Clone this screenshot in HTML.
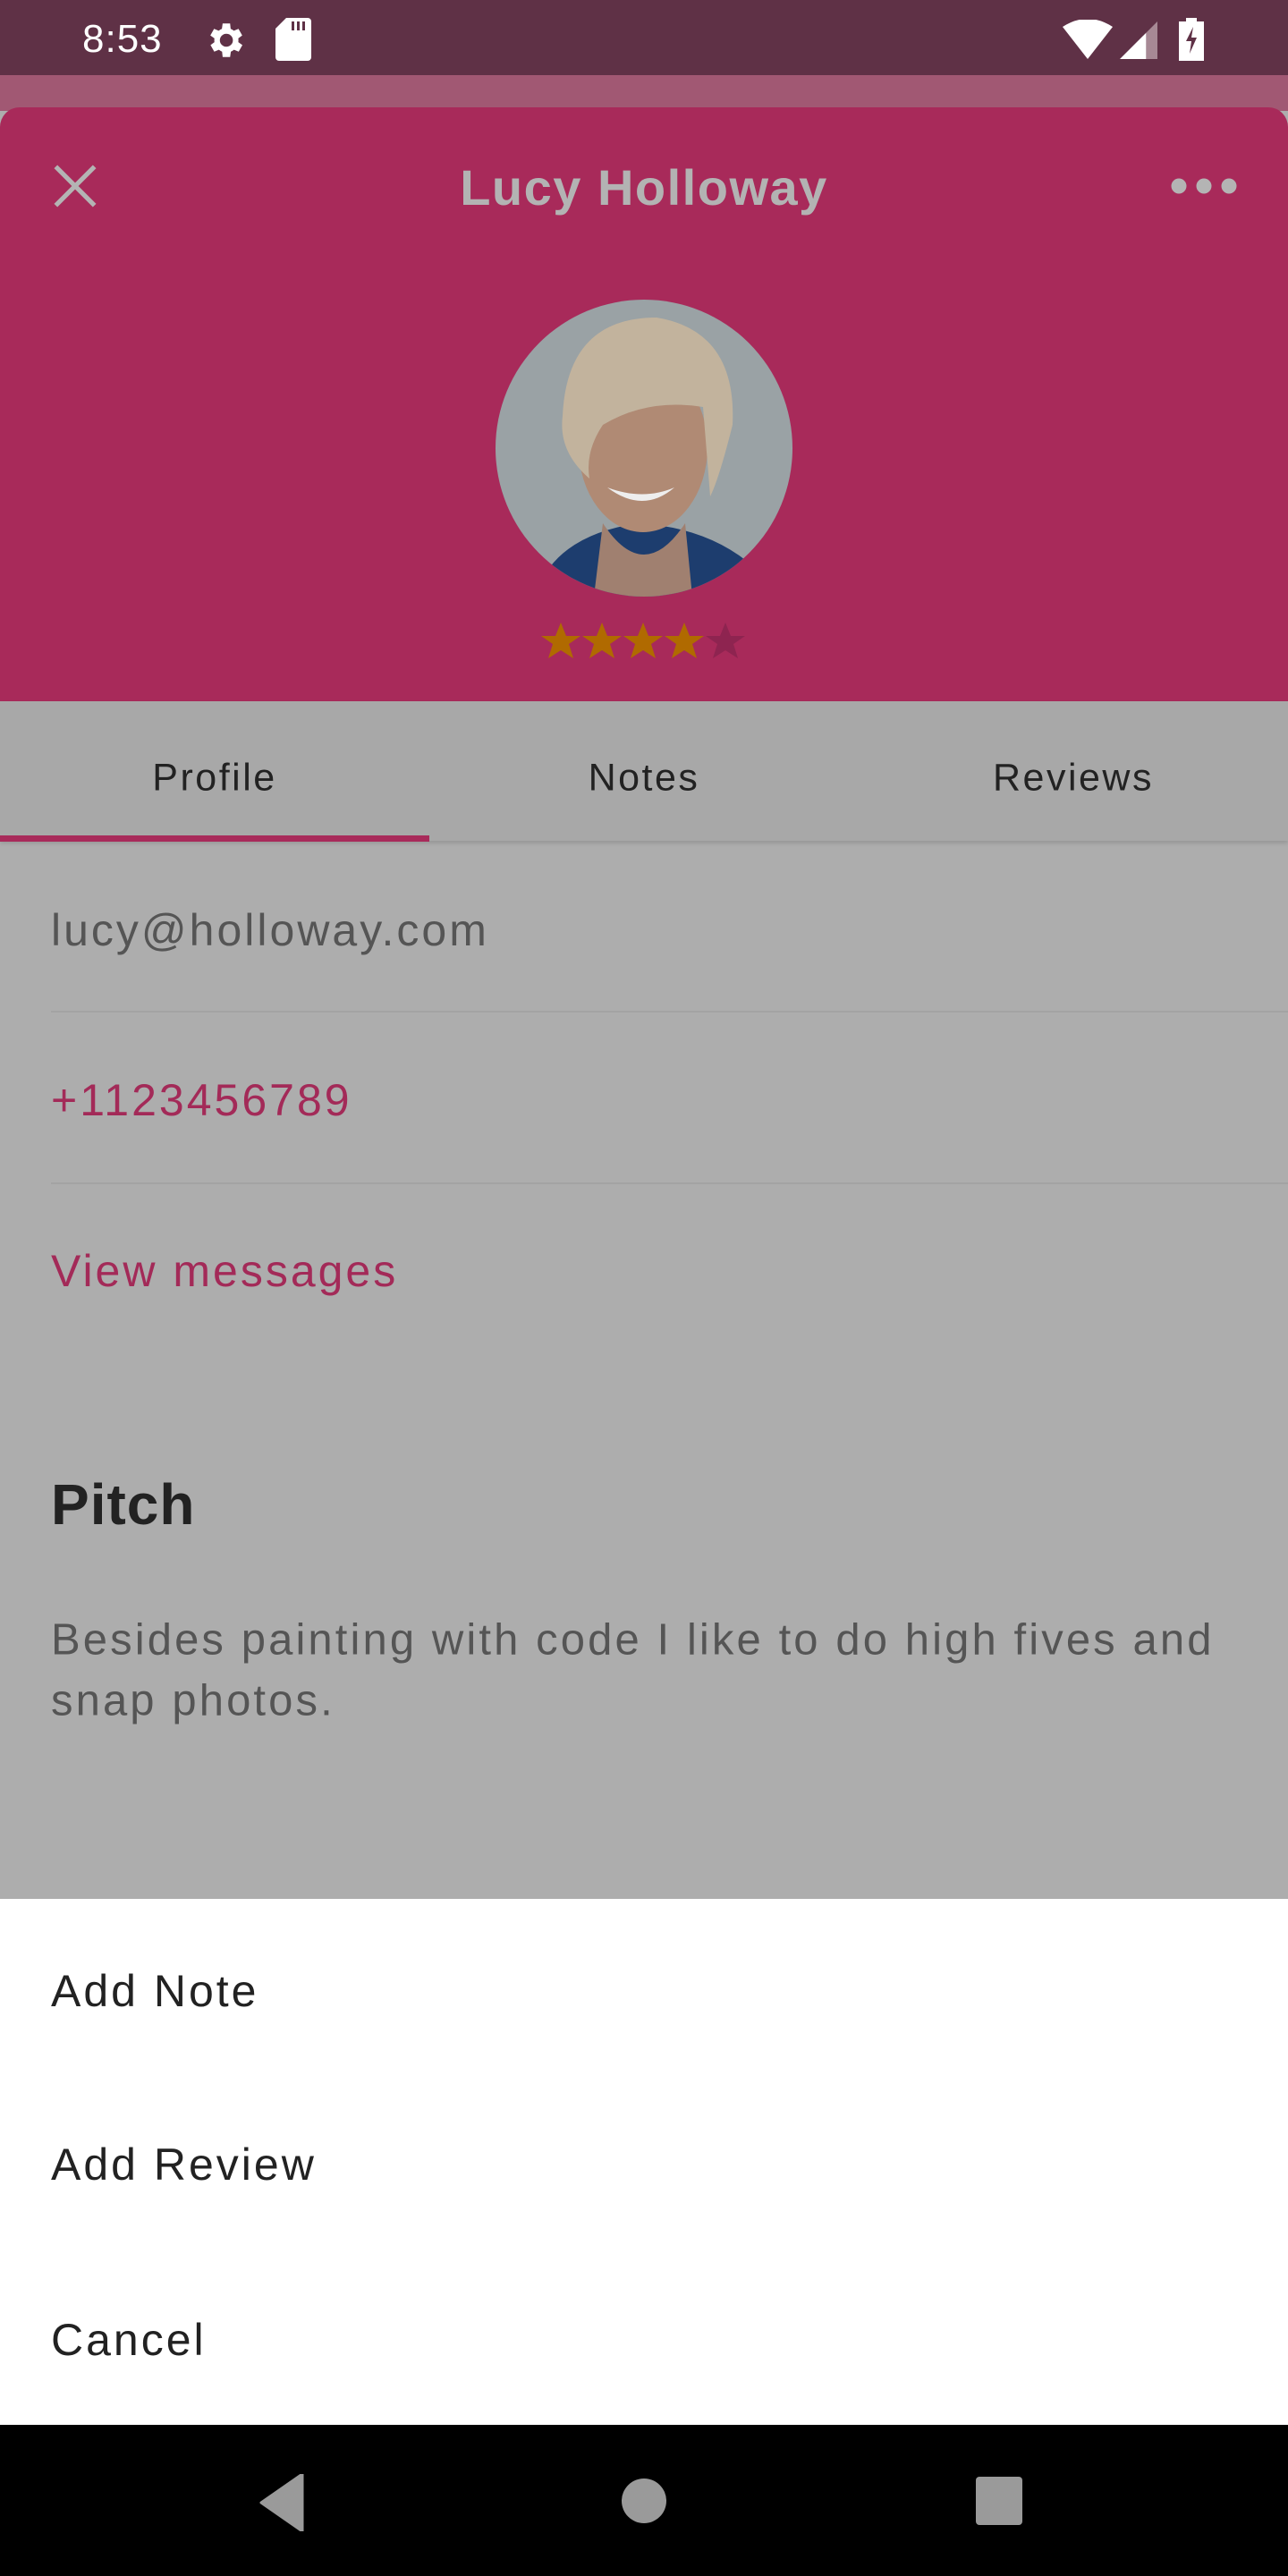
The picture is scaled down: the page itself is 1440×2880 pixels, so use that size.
<!DOCTYPE html>
<html><head><meta charset="utf-8"><style>
*{margin:0;padding:0;box-sizing:border-box}
body{width:1440px;height:2880px;position:relative;overflow:hidden;background:#adadad;font-family:"Liberation Sans",sans-serif}
.a{position:absolute;white-space:nowrap}
.t{line-height:1;transform:translateY(-50%)}
.b{font-size:50px;letter-spacing:3px}
</style></head><body>
<div class="a" style="left:0;top:0;width:1440px;height:84px;background:#5f3146"></div>
<div class="a" style="left:0;top:84px;width:1440px;height:40px;background:#a15873"></div>
<div class="a" style="left:0;top:120px;width:1440px;height:664px;background:#a82a5a;border-radius:22px 22px 0 0"></div>
<!-- status bar -->
<div class="a t" style="left:92px;top:44px;font-size:44px;color:#fff;letter-spacing:1px">8:53</div>
<svg class="a" style="left:226px;top:20px" width="50" height="50" viewBox="0 0 24 24"><path fill="#fff" d="M19.4 13a7.5 7.5 0 000-2l2.1-1.6-2-3.5-2.5 1a7 7 0 00-1.7-1L15 3h-4l-.4 2.9a7 7 0 00-1.7 1l-2.5-1-2 3.5L6.6 11a7.5 7.5 0 000 2l-2.1 1.6 2 3.5 2.5-1a7 7 0 001.7 1L11 21h4l.4-2.9a7 7 0 001.7-1l2.5 1 2-3.5zM13 15.5a3.5 3.5 0 110-7 3.5 3.5 0 010 7z"/></svg>
<svg class="a" style="left:308px;top:20px" width="40" height="48" viewBox="0 0 20 24"><path fill="#fff" d="M6 0h12a2 2 0 012 2v20a2 2 0 01-2 2H2a2 2 0 01-2-2V6z"/><path fill="#5f3146" d="M9 2h1.5v5H9zM12 2h1.5v5H12zM15 2h1.5v5H15z"/></svg>
<svg class="a" style="left:1188px;top:22px" width="56" height="44" viewBox="0 0 28 22"><path fill="#fff" d="M0 4Q14-5 28 4L14 22z"/></svg>
<svg class="a" style="left:1252px;top:24px" width="42" height="42" viewBox="0 0 20 20"><path fill="#fff" d="M0 20L14 6V20z"/><path fill="#a78995" d="M14 6L20 0V20H14z"/></svg>
<svg class="a" style="left:1318px;top:20px" width="28" height="48" viewBox="0 0 14 24"><path fill="#fff" d="M4 0h6v2h4v22H0V2h4z"/><path fill="#5f3146" d="M8 5L4 13h3l-1 7 4-9H7z"/></svg>
<!-- header -->
<svg class="a" style="left:58px;top:182px" width="52" height="52" viewBox="0 0 24 24"><path stroke="#b4b4b4" stroke-width="2.4" d="M2 2L22 22M22 2L2 22"/></svg>
<div class="a t" style="left:0;width:1440px;text-align:center;top:210px;font-size:56px;font-weight:bold;color:#b3b3b3;letter-spacing:1.5px">Lucy Holloway</div>
<svg class="a" style="left:1308px;top:196px" width="76" height="24" viewBox="0 0 76 24"><circle cx="10" cy="12" r="8.5" fill="#b4b4b4"/><circle cx="38" cy="12" r="8.5" fill="#b4b4b4"/><circle cx="66" cy="12" r="8.5" fill="#b4b4b4"/></svg>
<!-- avatar -->
<svg class="a" style="left:554px;top:335px" width="332" height="332" viewBox="0 0 332 332">
<defs><clipPath id="c"><circle cx="166" cy="166" r="166"/></clipPath></defs>
<g clip-path="url(#c)">
<rect width="332" height="332" fill="#9aa2a5"/>
<path d="M60 300Q90 260 160 250Q240 255 290 300V332H40z" fill="#1d3d6e"/>
<path d="M120 250Q166 320 212 250L220 332H110z" fill="#a08070"/>
<ellipse cx="165" cy="165" rx="72" ry="95" fill="#b08a74"/>
<path d="M75 130Q80 20 180 20Q270 35 265 140Q250 200 240 220L232 120Q170 110 120 140Q100 170 105 200Q70 170 75 130z" fill="#c2b39d"/>
<path d="M125 210Q165 240 200 210Q165 225 125 210z" fill="#eee"/>
</g></svg>
<!-- stars -->
<svg class="a" style="left:604px;top:696px" width="232" height="44" viewBox="0 0 232 44">
<defs><path id="s" d="M23 0l6 15h16l-13 9 5 16-14-9-14 9 5-16L1 15h16z"/></defs>
<use href="#s" x="0" fill="#b06a00"/><use href="#s" x="46" fill="#b06a00"/><use href="#s" x="92" fill="#b06a00"/><use href="#s" x="138" fill="#b06a00"/><use href="#s" x="184" fill="#8e2450"/>
</svg>
<!-- tabs -->
<div class="a" style="left:0;top:784px;width:1440px;height:156px;background:#a8a8a8;box-shadow:0 3px 4px rgba(0,0,0,.12)"></div>
<div class="a t" style="left:0;width:480px;text-align:center;top:870px;font-size:43px;color:#222;letter-spacing:2.5px">Profile</div>
<div class="a t" style="left:480px;width:480px;text-align:center;top:870px;font-size:43px;color:#222;letter-spacing:2.5px">Notes</div>
<div class="a t" style="left:960px;width:480px;text-align:center;top:870px;font-size:43px;color:#222;letter-spacing:2.5px">Reviews</div>
<div class="a" style="left:0;top:934px;width:480px;height:7px;background:#a82a5a"></div>
<!-- content -->
<div class="a t b" style="left:57px;top:1040px;color:#555">lucy@holloway.com</div>
<div class="a" style="left:57px;top:1130px;width:1383px;height:2px;background:#a3a3a3"></div>
<div class="a t b" style="left:57px;top:1230px;color:#a32a58">+1123456789</div>
<div class="a" style="left:57px;top:1322px;width:1383px;height:2px;background:#a3a3a3"></div>
<div class="a t b" style="left:57px;top:1421px;color:#a32a58">View messages</div>
<div class="a t" style="left:57px;top:1682px;font-size:64px;font-weight:bold;color:#222;letter-spacing:1px">Pitch</div>
<div class="a t" style="left:57px;top:1834px;font-size:49px;color:#555;letter-spacing:3.1px">Besides painting with code I like to do high fives and</div>
<div class="a t" style="left:57px;top:1902px;font-size:49px;color:#555;letter-spacing:3.1px">snap photos.</div>
<!-- sheet -->
<div class="a" style="left:0;top:2123px;width:1440px;height:588px;background:#fff"></div>
<div class="a t b" style="left:57px;top:2226px;color:#222">Add Note</div>
<div class="a t b" style="left:57px;top:2420px;color:#222">Add Review</div>
<div class="a t b" style="left:57px;top:2616px;color:#222">Cancel</div>
<!-- nav -->
<div class="a" style="left:0;top:2711px;width:1440px;height:169px;background:#000"></div>
<svg class="a" style="left:290px;top:2766px" width="52" height="64" viewBox="0 0 52 64"><path fill="#9a9a9a" d="M48 0V64L2 32z" stroke="#9a9a9a" stroke-linejoin="round" stroke-width="3"/></svg>
<div class="a" style="left:695px;top:2771px;width:50px;height:50px;border-radius:50%;background:#9a9a9a"></div>
<div class="a" style="left:1091px;top:2769px;width:52px;height:54px;border-radius:4px;background:#9a9a9a"></div>
</body></html>
